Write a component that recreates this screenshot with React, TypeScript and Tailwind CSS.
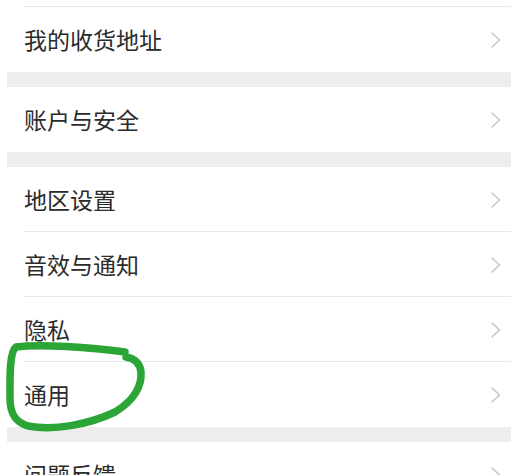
import React from 'react';

type Group = string[];

const groups: Group[] = [
  ['我的收货地址'],
  ['账户与安全'],
  ['地区设置', '音效与通知', '隐私', '通用'],
  ['问题反馈'],
];

const Chevron: React.FC = () => (
  <svg width="12" height="18" viewBox="0 0 12 18" fill="none">
    <polyline points="2,2 9.5,9 2,16" stroke="#c6c6c6" strokeWidth="1.6" strokeLinecap="round" strokeLinejoin="round" />
  </svg>
);

const Row: React.FC<{ label: string; divider: boolean }> = ({ label, divider }) => (
  <div className="relative flex h-[65px] items-center justify-between pl-[17px] pr-[9px]">
    <span className="text-[23px] leading-none text-[#2b2b2b]">{label}</span>
    <Chevron />
    {divider && <div className="absolute bottom-0 left-[17px] right-0 h-px bg-[#e8e8e8]" />}
  </div>
);

export default function App() {
  return (
    <div
      className="relative h-[475px] w-[511px] overflow-hidden bg-white"
      style={{ fontFamily: '"Noto Sans CJK SC", "Noto Sans", sans-serif' }}
    >
      <div className="ml-[7px]">
        {/* 上一行的分割线 */}
        <div className="relative h-[7px]">
          <div className="absolute bottom-0 left-[17px] right-0 h-px bg-[#e8e8e8]" />
        </div>

        {groups.map((g, gi) => (
          <div key={gi}>
            {gi > 0 && <div className="h-[15px] bg-[#ededed]" />}
            {g.map((label, i) => (
              <Row key={label} label={label} divider={i < g.length - 1} />
            ))}
          </div>
        ))}
      </div>

      {/* 手绘圈 */}
      <svg className="pointer-events-none absolute left-0 top-0" width="511" height="475" viewBox="0 0 511 475" fill="none">
        <path
          d="M125,352 C90,347 40,344 16,347 C9,352 10,380 10,398 C10,412 14,422 28,426 C55,431 90,424 115,412 C135,400 142,385 141,372 C140,362 133,358 126,357"
          stroke="#2aa536"
          strokeWidth="7.5"
          strokeLinecap="round"
          strokeLinejoin="round"
        />
      </svg>
    </div>
  );
}
